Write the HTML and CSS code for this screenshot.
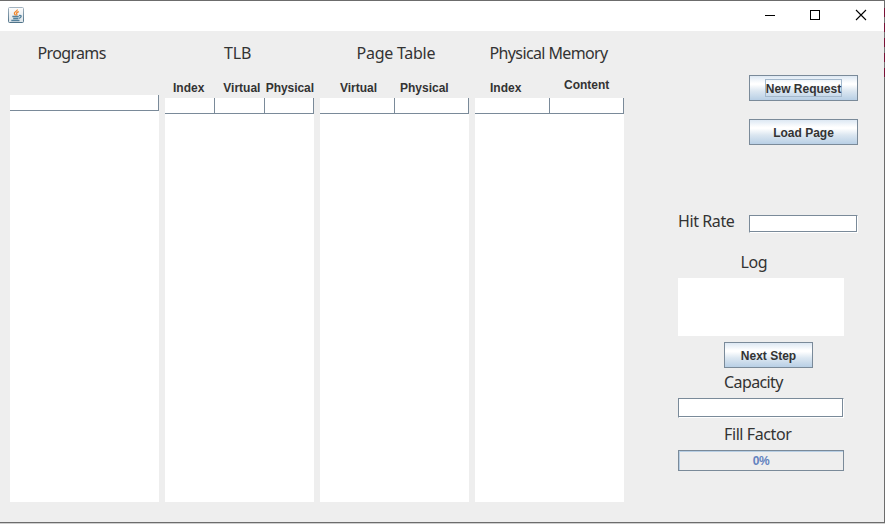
FILE: index.html
```html
<!DOCTYPE html>
<html lang="en">
<head>
<meta charset="utf-8">
<title>Paging</title>
<link rel="stylesheet" href="styles.css">
</head>
<body>
<div class="desktop">
<div class="window">
  <header class="titlebar">
    <svg class="java" width="16" height="16" viewBox="0 0 16 16" fill="none">
      <defs><linearGradient id="g" x1="0" y1="0" x2="0" y2="1"><stop offset="0" stop-color="#fdfdfd"/><stop offset="1" stop-color="#dce3e8"/></linearGradient>
      <linearGradient id="b" x1="0" y1="0" x2="0" y2="1"><stop offset="0" stop-color="#a3b3c0"/><stop offset="1" stop-color="#4f7389"/></linearGradient></defs>
      <rect x=".5" y=".5" width="15" height="15" rx="1" fill="url(#g)" stroke="url(#b)"/>
      <path d="M9.300 2.500C9.700 4.300 5.600 4.900 6.400 6.700C6.700 7.500 7.500 7.800 7.400 8.500M10.800 4.700C9 5.300 8 6.200 8.800 7.100C9.200 7.700 8.800 8 8.400 8.500" stroke="#f0862c" stroke-width="1.300"/>
      <path d="M4.300 9.500H10.800M5.200 11.500H10.300M3.300 13.500H11.500M11 8.600C14.200 7.900 13.600 10.800 10.800 11.300" stroke="#55819c" stroke-width="1.300"/>
    </svg>
    <svg class="controls" width="104" height="12" viewBox="0 0 104 12" fill="none" stroke="#000">
      <path d="M0 6.500H10M45.500 1.500H54.500V10.500H45.500Z" shape-rendering="crispEdges"/>
      <path d="M91 1L101 11M101 1L91 11" stroke-width="1.100"/>
    </svg>
  </header>
  <main class="content">
    <section class="column programs">
      <h2>Programs</h2>
      <div class="labels"></div>
      <div class="table"><div class="row"><i></i></div></div>
    </section>
    <section class="column tlb">
      <h2>TLB</h2>
      <div class="labels"><span class="l1">Index</span><span class="l2">Virtual</span><span class="l3">Physical</span></div>
      <div class="table"><div class="row"><i></i><i></i><i></i></div></div>
    </section>
    <section class="column pages">
      <h2>Page Table</h2>
      <div class="labels"><span class="l1">Virtual</span><span class="l2">Physical</span></div>
      <div class="table"><div class="row"><i></i><i></i></div></div>
    </section>
    <section class="column memory">
      <h2>Physical Memory</h2>
      <div class="labels"><span class="l1">Index</span><span class="l2">Content</span></div>
      <div class="table"><div class="row"><i></i><i></i></div></div>
    </section>
    <aside class="side">
      <button class="btn wide"><span class="focus">New Request</span></button>
      <button class="btn wide load">Load Page</button>
      <div class="rate"><h2>Hit Rate</h2><div class="field"></div></div>
      <h2 class="log-title">Log</h2>
      <div class="log"></div>
      <button class="btn next">Next Step</button>
      <h2 class="capacity-title">Capacity</h2>
      <div class="field capacity"></div>
      <h2 class="fill-title">Fill Factor</h2>
      <div class="progress"><span>0%</span></div>
    </aside>
  </main>
</div>
</div>
</body>
</html>
```
FILE: styles.css
```css
* { box-sizing: border-box; }
body { margin: 0; font: bold 12px/14px "Liberation Sans", Arial, sans-serif; color: #333; overflow: hidden; }
.desktop {
  width: 885px; height: 524px; padding: 0 1px 1px 0;
  background:
    repeating-linear-gradient(#7a1238 0 9px, #777 9px 15px) right 8px / 1px 70px no-repeat,
    linear-gradient(#6c6c6c, #6c6c6c) right top / 1px 523px no-repeat,
    #cfcfcf;
}
.window { width: 884px; height: 523px; border-top: 1px solid #6c6c6c; border-bottom: 1px solid #6c6c6c; background: #eee; display: flex; flex-direction: column; }
.titlebar { height: 30px; background: #fff; display: flex; justify-content: space-between; padding: 6px 15px 0 8px; }
.controls { margin-top: 2px; }
.content { flex: 1; display: flex; padding: 11px 0 20px 10px; }
h2 { margin: 0; font: 400 16px/22px "Noto Sans", sans-serif; white-space: nowrap; }
.column { width: 149px; margin-right: 6px; display: flex; flex-direction: column; }
.labels { height: 34px; padding-top: 17px; display: flex; white-space: nowrap; }
.table { flex: 1; background: #fff; }
.row { display: grid; grid-template-columns: 1fr; height: 16px; }
.row i { border: solid #7a8a99; border-width: 0 1px 1px 0; }
.programs h2 { margin-left: 27.500px; letter-spacing: -.65px; }
.programs .labels { height: 31px; }
.tlb h2 { margin-left: 59px; letter-spacing: -.2px; }
.tlb .row { grid-template-columns: 50px 50px 49px; }
.tlb .l1 { width: 51px; margin-left: 8px; }
.tlb .l2 { width: 42px; }
.tlb .l3 { margin-left: 1px; }
.tlb .l3 { letter-spacing: -.05px; }
.pages h2 { margin-left: 36.500px; letter-spacing: -.25px; }
.pages .row, .memory .row { grid-template-columns: 75px 74px; }
.pages .l1 { width: 60px; margin-left: 20px; }
.memory { margin-right: 0; }
.memory h2 { margin-left: 14.500px; letter-spacing: -.62px; }
.memory .l1 { width: 74px; margin-left: 15px; }
.memory .l2 { margin-top: -3px; }
.side { width: 260px; padding: 33px 0 0 54px; display: flex; flex-direction: column; }
.side h2 { letter-spacing: -.4px; }
.btn {
  height: 26px; padding: 0; flex: none; font: inherit; color: #333;
  display: flex; align-items: center; justify-content: center;
  border: 1px solid #7a8a99; border-radius: 0;
  background: linear-gradient(#dde8f3 0, #fff 30%, #fff 36%, #dce7f1 62%, #b8cfe5 100%);
}
.wide { width: 109px; margin-left: 71px; }
.focus { border: 1px solid #a3b8cc; height: 18px; width: 77px; line-height: 18px; white-space: nowrap; display: flex; justify-content: center; }
.load { margin-top: 18px; }
.load, .next { padding-top: 2px; }
.rate { display: flex; margin-top: 65px; height: 23px; }
.rate h2 { width: 71px; }
.rate .field { width: 109px; height: 18px; margin-top: 5px; }
.field { background: #fff; border: 1px solid #7a8a99; box-shadow: inset -1px -1px #7a8a99; border-right-color: #fff; border-bottom-color: #fff; }
.log-title { margin: 18px 0 0 62.500px; }
.log { width: 166px; height: 58px; margin-top: 5px; background: #fff; }
.next { width: 89px; margin: 6px 0 0 46px; }
.side .capacity-title { margin: 3px 0 0 46px; letter-spacing: -.6px; }
.capacity { width: 166px; height: 20px; margin-top: 5px; }
.fill-title { margin: 5px 0 0 46px; }
.progress { width: 166px; height: 21px; margin-top: 5px; border: 1px solid #7a8a99; box-shadow: inset 1px 1px #b8cfe5; text-align: center; line-height: 20px; letter-spacing: -.5px; color: #6382bf; }
```
